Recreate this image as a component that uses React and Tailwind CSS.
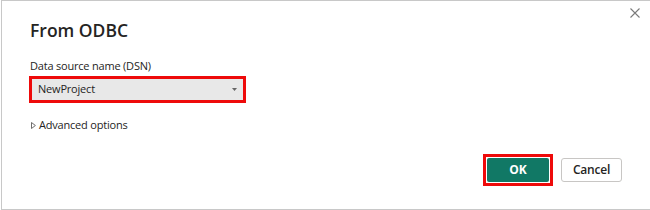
import React from 'react';

const font = { fontFamily: '"Open Sans", "Noto Sans", sans-serif' };

// Close glyph, thin cross in the dialog corner
const CloseIcon = () => (
  <svg width="10" height="10" viewBox="0 0 10 10" fill="none" stroke="#7a7a7a" strokeWidth="1.1">
    <path d="M0.5 0.5 L9.5 9.5 M9.5 0.5 L0.5 9.5" />
  </svg>
);

const Caret = () => (
  <svg width="5" height="3" viewBox="0 0 5 3" fill="#666">
    <path d="M0 0 H5 L2.5 3 Z" />
  </svg>
);

const Expander = () => (
  <svg width="5" height="7" viewBox="0 0 5 7" fill="none" stroke="#605e5c" strokeWidth="0.9">
    <path d="M0.5 0.5 L4.4 3.5 L0.5 6.5 Z" />
  </svg>
);

export default function App() {
  return (
    <div className="w-[650px] h-[210px] bg-white" style={font}>
      <div className="relative ml-px h-[210px] border-t border-l border-b border-[#c8c8c8] pl-[27px] pr-[28px]">
        <button type="button" className="absolute top-[7px] right-[10px] flex" aria-label="Close">
          <CloseIcon />
        </button>

        <h1 className="mt-[17px] ml-px h-[24px] text-[17.5px] leading-[24px] font-semibold text-[#252423]">
          From ODBC
        </h1>

        <div className="mt-[16px] ml-px h-[16px] text-[11px] leading-[16px] tracking-[-0.2px] text-[#252423]">
          Data source name (DSN)
        </div>

        <div className="mt-[2px] w-[217px] border-[3px] border-[#ee0a0a]">
          <div className="flex h-[21px] items-center justify-between bg-[#e8e8e8] pl-[6px] pr-[6px] pb-px">
            <span className="text-[11px] leading-[16px] tracking-[-0.2px] text-[#252423]">NewProject</span>
            <Caret />
          </div>
        </div>

        <div className="mt-[14px] ml-[2px] flex h-[16px] items-center gap-[3px] text-[11px] leading-[16px] tracking-[-0.2px] text-[#252423]">
          <Expander />
          <span>Advanced options</span>
        </div>

        <div className="mt-[21px] flex items-center justify-end gap-[8px]">
          <div className="border-[3px] border-[#ee0a0a] p-px">
            <button
              type="button"
              className="flex h-[24px] w-[62px] items-center justify-center rounded-[2px] bg-[#117865] text-[12px] font-bold text-white"
            >
              OK
            </button>
          </div>
          <button
            type="button"
            className="flex h-[24px] w-[61px] items-center justify-center rounded-[3px] border border-[#c8c6c4] bg-white text-[12px] font-semibold tracking-[-0.2px] text-[#252423]"
          >
            Cancel
          </button>
        </div>
      </div>
    </div>
  );
}
